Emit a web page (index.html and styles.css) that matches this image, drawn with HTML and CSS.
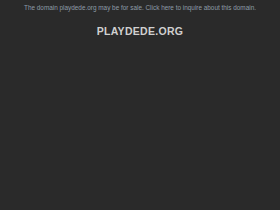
FILE: index.html
```html
<!DOCTYPE html>
<html lang="en">
<head>
  <meta charset="UTF-8">
  <meta name="viewport" content="width=device-width, initial-scale=1.0">
  <title>playdede.org</title>
  <link rel="stylesheet" href="styles.css">
</head>
<body>
  <!-- sale notice -->
  <div class="notice">
    <a href="#">The domain playdede.org may be for sale. Click here to inquire about this domain.</a>
  </div>

  <div class="header">
    <h1>PLAYDEDE.ORG</h1>
  </div>
</body>
</html>
```

FILE: styles.css
```css
body {
  margin: 0;
  height: 210px;
  background-color: #2a2a2a;
  font-family: 'Liberation Sans', Arial, sans-serif;
  overflow: hidden;
}

/* top bar */
.notice {
  text-align: center;
  padding-top: 1px;
  line-height: 8px;
}
.notice a {
  font-size: 6.4px;
  color: #8e9ca8;
  text-decoration: none;
}

/* domain title */
.header {
  text-align: center;
  padding-top: 13px;
}
h1 {
  margin: 0;
  font-size: 10.5px;
  line-height: 12px;
  letter-spacing: 0.3px;
  color: #d0d0d0;
}
```
